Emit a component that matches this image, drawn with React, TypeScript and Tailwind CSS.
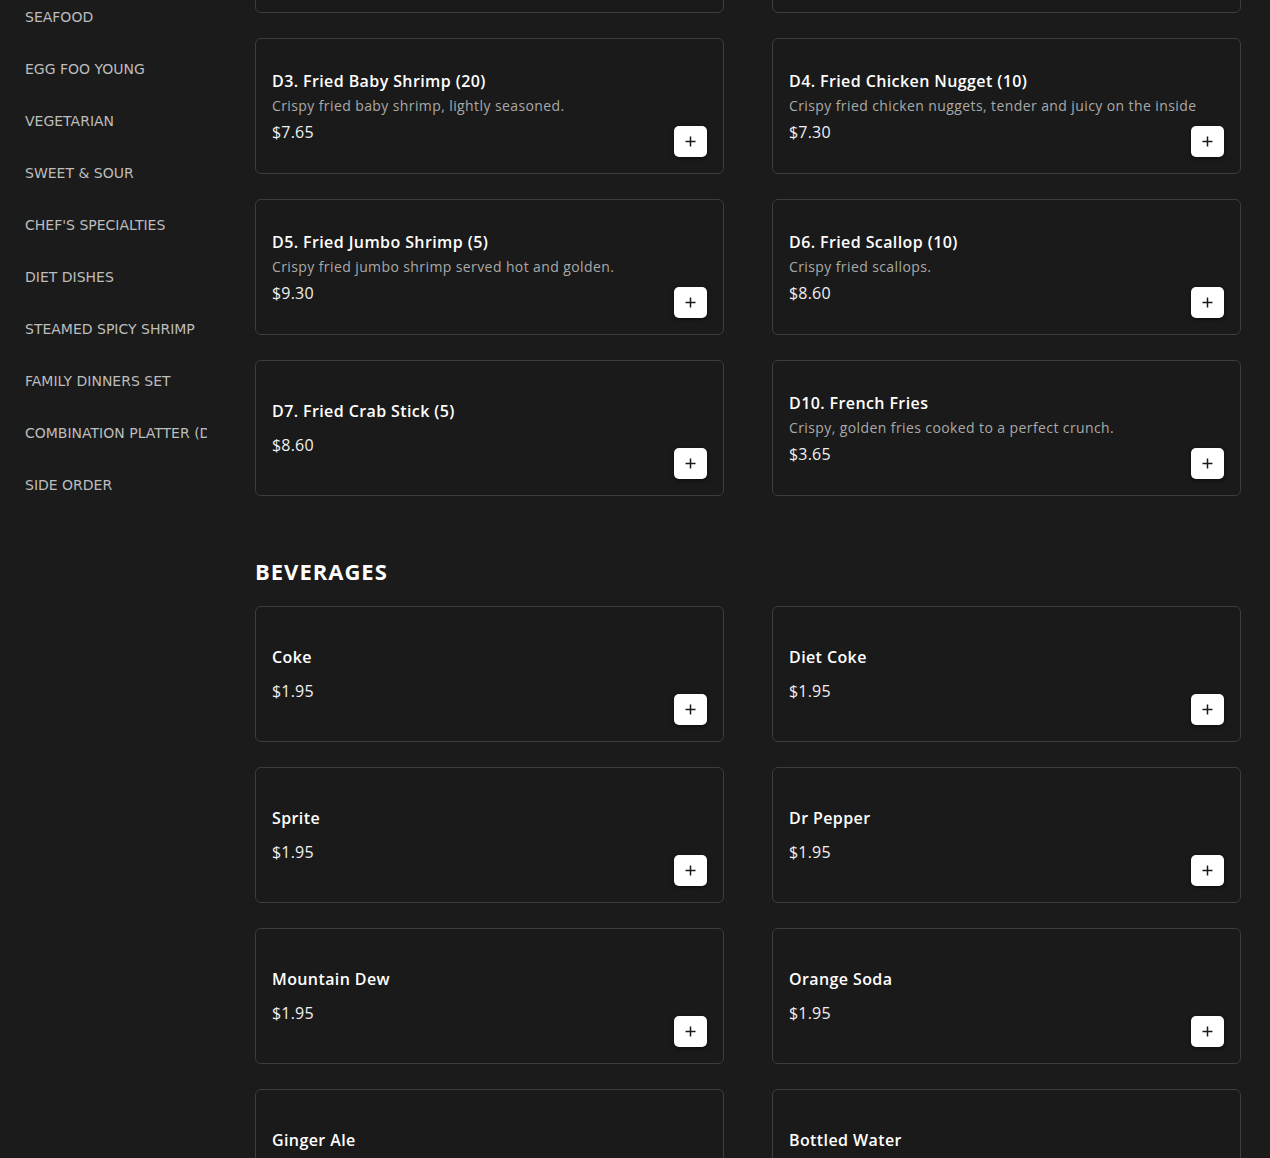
import React from "react";

type Item = { name: string; desc?: string; price: string };

const sidebar = [
  "SEAFOOD",
  "EGG FOO YOUNG",
  "VEGETARIAN",
  "SWEET & SOUR",
  "CHEF'S SPECIALTIES",
  "DIET DISHES",
  "STEAMED SPICY SHRIMP",
  "FAMILY DINNERS SET",
  "COMBINATION PLATTER (D",
  "SIDE ORDER",
];

const sides: Item[] = [
  { name: "D1. Egg Roll (1)", desc: "Crispy egg roll.", price: "$1.95" },
  { name: "D2. Spring Roll (1)", desc: "Crispy spring roll.", price: "$1.95" },
  { name: "D3. Fried Baby Shrimp (20)", desc: "Crispy fried baby shrimp, lightly seasoned.", price: "$7.65" },
  { name: "D4. Fried Chicken Nugget (10)", desc: "Crispy fried chicken nuggets, tender and juicy on the inside", price: "$7.30" },
  { name: "D5. Fried Jumbo Shrimp (5)", desc: "Crispy fried jumbo shrimp served hot and golden.", price: "$9.30" },
  { name: "D6. Fried Scallop (10)", desc: "Crispy fried scallops.", price: "$8.60" },
  { name: "D7. Fried Crab Stick (5)", price: "$8.60" },
  { name: "D10. French Fries", desc: "Crispy, golden fries cooked to a perfect crunch.", price: "$3.65" },
];

const beverages: Item[] = [
  { name: "Coke", price: "$1.95" },
  { name: "Diet Coke", price: "$1.95" },
  { name: "Sprite", price: "$1.95" },
  { name: "Dr Pepper", price: "$1.95" },
  { name: "Mountain Dew", price: "$1.95" },
  { name: "Orange Soda", price: "$1.95" },
  { name: "Ginger Ale", price: "$1.95" },
  { name: "Bottled Water", price: "$1.95" },
];

function PlusIcon() {
  return (
    <svg width="11" height="11" viewBox="0 0 11 11" fill="none">
      <path d="M5.5 0.5v10M0.5 5.5h10" stroke="#1a1a1a" strokeWidth="1.5" />
    </svg>
  );
}

function Card({ item }: { item: Item }) {
  return (
    <div className="flex h-[136px] rounded-[6px] border border-[#3d3d3d] bg-[#1a1a1a] p-4">
      <div className="flex min-w-0 flex-1 flex-col justify-center">
        <div className="text-[16px] font-semibold leading-[24px] tracking-[0.4px] text-white">{item.name}</div>
        {item.desc ? (
          <div className="mt-[3px] whitespace-nowrap text-[14px] leading-[20px] tracking-[0.4px] text-[#a9a9a9]">
            {item.desc}
          </div>
        ) : null}
        <div
          className={`${item.desc ? "mt-[4px]" : "mt-[10px]"} text-[16px] leading-[24px] tracking-[0.2px] text-[#f0f0f0]`}
        >
          {item.price}
        </div>
      </div>
      <div className="flex items-end">
        <button className="flex h-[31px] w-[33px] items-center justify-center rounded-[5px] bg-white shadow-[0_1px_4px_rgba(0,0,0,0.6)]">
          <PlusIcon />
        </button>
      </div>
    </div>
  );
}

export default function App() {
  return (
    <div
      className="flex h-[1158px] overflow-hidden bg-[#1b1b1b]"
      style={{ fontFamily: '"Open Sans", "Noto Sans", sans-serif' }}
    >
      <aside
        className="w-[207px] shrink-0 overflow-hidden pl-[25px]"
        style={{ fontFamily: '"DejaVu Sans", sans-serif' }}
      >
        <div className="mt-[-9px] flex flex-col">
          {sidebar.map((s) => (
            <div key={s} className="whitespace-nowrap py-4 text-[14px] leading-[20px] text-[#bdbdbd]">
              {s}
            </div>
          ))}
        </div>
      </aside>
      <main className="flex-1 pl-[48px] pr-[29px]">
        <div className="mt-[-123px] grid grid-cols-2 gap-x-[48px] gap-y-[25px]">
          {sides.map((it) => (
            <Card key={it.name} item={it} />
          ))}
        </div>
        <h2 className="mb-[21px] mt-[61px] text-[22px] font-bold leading-[28px] tracking-[1px] text-white">
          BEVERAGES
        </h2>
        <div className="grid grid-cols-2 gap-x-[48px] gap-y-[25px]">
          {beverages.map((it) => (
            <Card key={it.name} item={it} />
          ))}
        </div>
      </main>
    </div>
  );
}
